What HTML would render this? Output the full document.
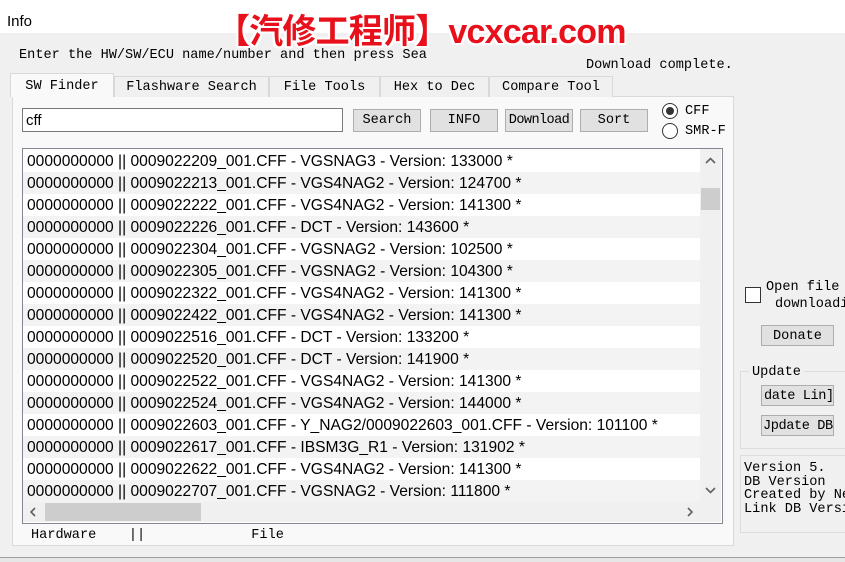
<!DOCTYPE html>
<html><head><meta charset="utf-8"><style>
*{margin:0;padding:0;box-sizing:border-box}
body{width:845px;height:562px;background:#f0f0f0;position:relative;overflow:hidden;font-family:"Liberation Mono",monospace;font-size:13.6px;color:#000}
.a{position:absolute;white-space:nowrap}
.btn{position:absolute;background:#e1e1e1;border:1px solid #adadad;text-align:center;font-family:"Liberation Mono",monospace;font-size:13.6px;line-height:22px;overflow:hidden;white-space:nowrap}
.tab{position:absolute;top:76px;height:21px;border:1px solid #d9d9d9;border-bottom:none;background:#f0f0f0;line-height:22px;text-align:center}
.row{position:absolute;left:23px;width:677px;height:22px;font-family:"Liberation Sans",sans-serif;font-size:15.6px;line-height:23px;padding-left:4px;white-space:nowrap;overflow:hidden}
</style></head><body>
<div class="a" style="left:0;top:0;width:845px;height:33px;background:#fff"></div>
<div class="a" style="left:7px;top:13px;font-family:'Liberation Sans',sans-serif;font-size:15px">Info</div>
<div class="a" style="left:216px;top:4px;font-family:'Liberation Sans','Noto Sans CJK SC',sans-serif;font-weight:bold;font-size:34px;color:#e8101a;text-shadow:2px 0 #fff,-2px 0 #fff,0 2px #fff,0 -2px #fff,2px 2px #fff,-2px -2px #fff,2px -2px #fff,-2px 2px #fff;letter-spacing:-0.8px">【汽修工程师】vcxcar.com</div>
<div class="a" style="left:19px;top:48px">Enter the HW/SW/ECU name/number and then press Sea</div>
<div class="a" style="left:586px;top:58px">Download complete.</div>
<div class="a" style="left:12px;top:96px;width:722px;height:450px;border:1px solid #d9d9d9;background:#f9f9f9"></div>
<div class="tab" style="left:10px;top:73px;height:24px;width:104px;background:#f9f9f9;border-color:#d9d9d9;line-height:25px">SW Finder</div>
<div class="tab" style="left:114px;width:155px">Flashware Search</div>
<div class="tab" style="left:269px;width:111px">File Tools</div>
<div class="tab" style="left:380px;width:109px">Hex to Dec</div>
<div class="tab" style="left:489px;width:124px">Compare Tool</div>
<div class="a" style="left:22px;top:108px;width:321px;height:24px;border:1px solid #7a7a7a;background:#fff;font-family:'Liberation Sans',sans-serif;font-size:15px;line-height:23px;padding-left:3px">cff</div>
<div class="btn" style="left:353px;top:109px;width:68px;height:23px">Search</div>
<div class="btn" style="left:430px;top:109px;width:68px;height:23px">INFO</div>
<div class="btn" style="left:505px;top:109px;width:68px;height:23px;letter-spacing:-0.6px">Download</div>
<div class="btn" style="left:580px;top:109px;width:68px;height:23px">Sort</div>
<div class="a" style="left:662px;top:103px;width:16px;height:16px;border:1px solid #333;border-radius:50%;background:#fff"><div style="margin:3px;width:8px;height:8px;border-radius:50%;background:#333"></div></div>
<div class="a" style="left:685px;top:104px">CFF</div>
<div class="a" style="left:662px;top:123px;width:16px;height:16px;border:1px solid #333;border-radius:50%;background:#fff"></div>
<div class="a" style="left:685px;top:124px">SMR-F</div>
<div class="a" style="left:22px;top:148px;width:701px;height:376px;border:1px solid #828790;background:#fff"></div>
<div class="a" style="left:700px;top:149px;width:21px;height:353px;background:#f0f0f0"></div>
<div class="a" style="left:701px;top:188px;width:19px;height:22px;background:#cdcdcd"></div>
<svg class="a" style="left:700px;top:150px" width="21" height="20"><path d="M6 13 L10.5 8.5 L15 13" fill="none" stroke="#606060" stroke-width="1.6"/></svg>
<svg class="a" style="left:700px;top:481px" width="21" height="20"><path d="M6 7 L10.5 11.5 L15 7" fill="none" stroke="#606060" stroke-width="1.6"/></svg>
<div class="a" style="left:23px;top:502px;width:677px;height:20px;background:#f0f0f0"></div>
<div class="a" style="left:700px;top:502px;width:21px;height:20px;background:#f0f0f0"></div>
<div class="a" style="left:45px;top:503px;width:156px;height:18px;background:#cdcdcd"></div>
<svg class="a" style="left:23px;top:502px" width="20" height="20"><path d="M12 6 L8 10 L12 14" fill="none" stroke="#606060" stroke-width="1.6"/></svg>
<svg class="a" style="left:680px;top:502px" width="20" height="20"><path d="M8 6 L12 10 L8 14" fill="none" stroke="#606060" stroke-width="1.6"/></svg>
<div class="row" style="top:150px;background:#fff">0000000000 || 0009022209_001.CFF - VGSNAG3 - Version: 133000 *</div>
<div class="row" style="top:172px;background:#f3f3f3">0000000000 || 0009022213_001.CFF - VGS4NAG2 - Version: 124700 *</div>
<div class="row" style="top:194px;background:#fff">0000000000 || 0009022222_001.CFF - VGS4NAG2 - Version: 141300 *</div>
<div class="row" style="top:216px;background:#f3f3f3">0000000000 || 0009022226_001.CFF - DCT - Version: 143600 *</div>
<div class="row" style="top:238px;background:#fff">0000000000 || 0009022304_001.CFF - VGSNAG2 - Version: 102500 *</div>
<div class="row" style="top:260px;background:#f3f3f3">0000000000 || 0009022305_001.CFF - VGSNAG2 - Version: 104300 *</div>
<div class="row" style="top:282px;background:#fff">0000000000 || 0009022322_001.CFF - VGS4NAG2 - Version: 141300 *</div>
<div class="row" style="top:304px;background:#f3f3f3">0000000000 || 0009022422_001.CFF - VGS4NAG2 - Version: 141300 *</div>
<div class="row" style="top:326px;background:#fff">0000000000 || 0009022516_001.CFF - DCT - Version: 133200 *</div>
<div class="row" style="top:348px;background:#f3f3f3">0000000000 || 0009022520_001.CFF - DCT - Version: 141900 *</div>
<div class="row" style="top:370px;background:#fff">0000000000 || 0009022522_001.CFF - VGS4NAG2 - Version: 141300 *</div>
<div class="row" style="top:392px;background:#f3f3f3">0000000000 || 0009022524_001.CFF - VGS4NAG2 - Version: 144000 *</div>
<div class="row" style="top:414px;background:#fff">0000000000 || 0009022603_001.CFF - Y_NAG2/0009022603_001.CFF - Version: 101100 *</div>
<div class="row" style="top:436px;background:#f3f3f3">0000000000 || 0009022617_001.CFF - IBSM3G_R1 - Version: 131902 *</div>
<div class="row" style="top:458px;background:#fff">0000000000 || 0009022622_001.CFF - VGS4NAG2 - Version: 141300 *</div>
<div class="row" style="top:480px;background:#f3f3f3;height:22px">0000000000 || 0009022707_001.CFF - VGSNAG2 - Version: 111800 *</div>
<div class="a" style="left:31px;top:528px">Hardware&nbsp;&nbsp;&nbsp;&nbsp;||&nbsp;&nbsp;&nbsp;&nbsp;&nbsp;&nbsp;&nbsp;&nbsp;&nbsp;&nbsp;&nbsp;&nbsp;&nbsp;File</div>
<div class="a" style="left:0;top:557px;width:845px;height:5px;background:#e6e6e6;border-top:1px solid #a0a0a0"></div>
<div class="a" style="left:745px;top:287px;width:16px;height:16px;border:1px solid #333;background:#fff"></div>
<div class="a" style="left:766px;top:280px">Open file</div>
<div class="a" style="left:775px;top:297px">downloadi</div>
<div class="btn" style="left:761px;top:325px;width:73px;height:21px;line-height:21px">Donate</div>
<div class="a" style="left:740px;top:371px;width:110px;height:78px;border:1px solid #dcdcdc"></div>
<div class="a" style="left:749px;top:365px;background:#f0f0f0;padding:0 3px">Update</div>
<div class="btn" style="left:761px;top:385px;width:73px;height:21px;line-height:21px;text-align:left;padding-left:2px;letter-spacing:-0.4px">date Lin]</div>
<div class="btn" style="left:761px;top:415px;width:73px;height:21px;line-height:21px;text-align:left;padding-left:1px;letter-spacing:-0.4px">Jpdate DB</div>
<div class="a" style="left:740px;top:455px;width:110px;height:78px;border:1px solid #dcdcdc"></div>
<div class="a" style="left:744px;top:462px;line-height:13.5px">Version 5.<br>DB Version<br>Created by Ne<br>Link DB Versi</div>
</body></html>
